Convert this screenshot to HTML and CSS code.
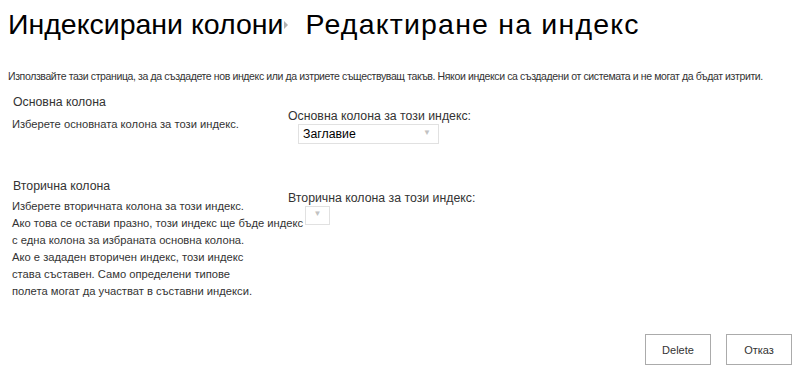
FILE: index.html
```html
<!DOCTYPE html>
<html lang="bg">
<head>
  <meta charset="UTF-8" />
  <title>Редактиране на индекс</title>
  <link rel="stylesheet" href="styles.css">
</head>
<body>
  <div class="page">
    <div class="title-row">
      <h1 class="crumb">Индексирани колони</h1>
      <span class="crumb-arrow"></span>
      <h1 class="current">Редактиране на индекс</h1>
    </div>
    <p class="intro">Използвайте тази страница, за да създадете нов индекс или да изтриете съществуващ такъв. Някои индекси са създадени от системата и не могат да бъдат изтрити.</p>

    <div class="section first">
      <div class="section-info">
        <h3>Основна колона</h3>
        <div class="section-desc">Изберете основната колона за този индекс.</div>
      </div>
      <div class="section-field">
        <label>Основна колона за този индекс:</label>
        <div class="select wide"><span>Заглавие</span><i class="caret">▼</i></div>
      </div>
    </div>

    <div class="section second">
      <div class="section-info">
        <h3>Вторична колона</h3>
        <div class="section-desc">Изберете вторичната колона за този индекс.<br>Ако това се остави празно, този индекс ще бъде индекс<br>с една колона за избраната основна колона.<br>Ако е зададен вторичен индекс, този индекс<br>става съставен. Само определени типове<br>полета могат да участват в съставни индекси.</div>
      </div>
      <div class="section-field">
        <label>Вторична колона за този индекс:</label>
        <div class="select narrow"><i class="caret">▼</i></div>
      </div>
    </div>

    <div class="buttons">
      <button>Delete</button>
      <button>Отказ</button>
    </div>
  </div>
</body>
</html>
```

FILE: styles.css
```css
body {
  margin: 0;
  background: #fff;
  color: #333;
  font-family: "Liberation Sans", Arial, sans-serif;
}
.page {
  padding: 0 8px;
  width: 784px;
}
.title-row {
  display: flex;
  align-items: center;
  height: 48px;
}
.title-row h1 {
  margin: 0;
  font-weight: normal;
  font-size: 28.5px;
  line-height: 34px;
  color: #000;
  white-space: nowrap;
}
.title-row .current {
  letter-spacing: 1.2px;
}
.crumb-arrow {
  width: 0;
  height: 0;
  border-top: 4px solid transparent;
  border-bottom: 4px solid transparent;
  border-left: 4px solid #b0b0b0;
  margin: 2px 17px 0 1px;
}
.intro {
  margin: 21px 0 0;
  font-size: 10.5px;
  line-height: 14px;
  letter-spacing: -0.38px;
  white-space: nowrap;
}
.section {
  display: grid;
  grid-template-columns: 280px 1fr;
}
.section-info h3 {
  margin: 0;
  font-weight: normal;
  font-size: 12.3px;
  line-height: 16px;
  padding-left: 5px;
}
.section-desc {
  font-size: 11.2px;
  line-height: 17px;
  padding-left: 4px;
  white-space: nowrap;
}
.first {
  margin-top: 11px;
}
.first .section-desc {
  margin-top: 6px;
}
.first .section-field {
  padding-top: 14px;
}
.second {
  margin-top: 34px;
}
.second .section-desc {
  margin-top: 4px;
}
.second .section-field {
  padding-top: 12px;
}
.section-field label {
  display: block;
  font-size: 12.3px;
  line-height: 16px;
}
.select {
  display: flex;
  align-items: center;
  justify-content: space-between;
  box-sizing: border-box;
  border: 1px solid #e1e1e1;
  font-size: 12.3px;
  color: #000;
}
.select.wide {
  width: 141px;
  height: 20px;
  margin: 0 0 0 10px;
  padding: 0 7px 0 4px;
}
.select.narrow {
  width: 25px;
  height: 19px;
  margin: 0 0 0 17px;
  justify-content: center;
}
.caret {
  font-style: normal;
  font-size: 8px;
  color: #c2c2c2;
  margin-top: -4px;
}
.buttons {
  display: flex;
  justify-content: flex-end;
  gap: 15px;
  margin-top: 34px;
}
.buttons button {
  width: 66px;
  height: 31px;
  background: #fff;
  border: 1px solid #ababab;
  font-family: "Liberation Sans", Arial, sans-serif;
  font-size: 11px;
  color: #333;
  padding: 0;
}
```
